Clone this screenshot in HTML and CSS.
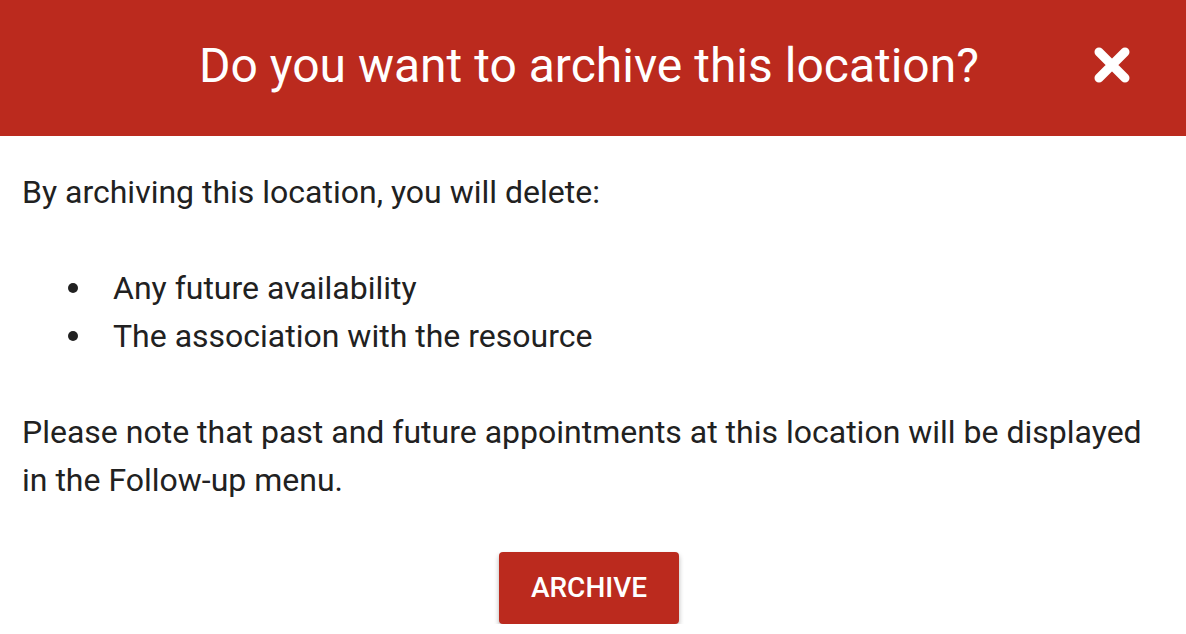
FILE: index.html
```html
<!DOCTYPE html>
<html lang="en">

<head>
    <meta charset="UTF-8">
    <meta name="viewport" content="width=device-width, initial-scale=1.0">
    <title>Archive location</title>

    <link rel="stylesheet" href="styles.css">
</head>

<body>
    <div class="dialog">
        <div class="dialog-header">
            <h1>Do you want to archive this location?</h1>
            <div class="close-btn">
                <svg width="36" height="36" viewBox="0 0 36 36">
                    <path d="M5 5 L31 31 M31 5 L5 31" stroke="#fff" stroke-width="9" stroke-linecap="round" fill="none" />
                </svg>
            </div>
        </div>
        <div class="dialog-body">
            <p>By archiving this location, you will delete:</p>
            <ul>
                <li>Any future availability</li>
                <li>The association with the resource</li>
            </ul>
            <p>Please note that past and future appointments at this location will be displayed in the Follow-up menu.</p>
            <div class="actions">
                <div class="btn">Archive</div>
            </div>
        </div>
    </div>
</body>

</html>
```

FILE: styles.css
```css
* {
    box-sizing: border-box;
}

body {
    margin: 0;
    font-family: Roboto, "Liberation Sans", sans-serif;
    background-color: #fff;
}

.dialog {
    width: 100%;
}

.dialog-header {
    height: 136px;
    background-color: #bb2a1e;
    color: #fff;
    display: flex;
    align-items: center;
    justify-content: center;
    padding: 0 8px 6px 0;
    position: relative;
}

h1 {
    margin: 0;
    font-size: 48px;
    font-weight: 400;
    text-align: center;
}

.close-btn {
    position: absolute;
    right: 56px;
    top: 47px;
    width: 36px;
    height: 36px;
}

.close-btn svg {
    display: block;
}

.dialog-body {
    padding: 32px 30px 0 22px;
    font-size: 32px;
    line-height: 48px;
    color: #212121;
}

p {
    margin: 0 0 48px 0;
}

ul {
    margin: 0 0 48px 0;
    padding-left: 46px;
    list-style: none;
}

li::before {
    content: "";
    display: inline-block;
    width: 10px;
    height: 10px;
    border-radius: 50%;
    background-color: #212121;
    margin-right: 35px;
    vertical-align: middle;
    position: relative;
    top: -3px;
}

.actions {
    display: flex;
    justify-content: center;
}

.btn {
    width: 180px;
    height: 72px;
    line-height: 72px;
    background-color: #bb2a1e;
    color: #fff;
    text-align: center;
    text-transform: uppercase;
    font-size: 28px;
    font-weight: 500;
    border-radius: 4px;
    box-shadow: 0 3px 5px rgba(0, 0, 0, 0.3);
    cursor: pointer;
}
```
